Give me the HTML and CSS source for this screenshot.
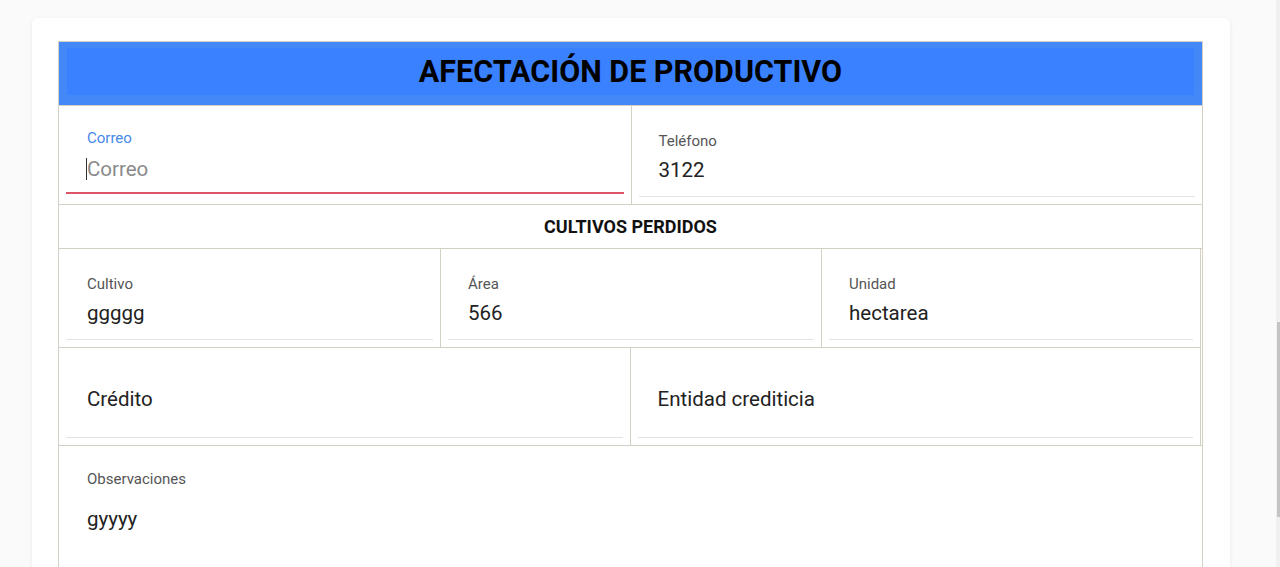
FILE: index.html
```html
<!DOCTYPE html>
<html lang="es">
<head>
<meta charset="utf-8">
<title>Afectación de productivo</title>
<link rel="stylesheet" href="styles.css">
</head>
<body>
<div class="page">
  <div class="card">
    <div class="form">
      <div class="head"><div class="head-inner">AFECTACIÓN DE PRODUCTIVO</div></div>
      <div class="row two">
        <div class="cell">
          <div class="field focus">
            <div class="label blue">Correo</div>
            <div class="value placeholder"><span class="caret"></span>Correo</div>
          </div>
        </div>
        <div class="cell divider">
          <div class="field">
            <div class="label">Teléfono</div>
            <div class="value">3122</div>
          </div>
        </div>
      </div>
      <div class="row section">CULTIVOS PERDIDOS</div>
      <div class="sub">
        <div class="row three">
          <div class="cell">
            <div class="field">
              <div class="label">Cultivo</div>
              <div class="value">ggggg</div>
            </div>
          </div>
          <div class="cell divider">
            <div class="field">
              <div class="label">Área</div>
              <div class="value">566</div>
            </div>
          </div>
          <div class="cell divider">
            <div class="field">
              <div class="label">Unidad</div>
              <div class="value">hectarea</div>
            </div>
          </div>
        </div>
        <div class="row two">
          <div class="cell">
            <div class="field empty">
              <div class="big">Crédito</div>
            </div>
          </div>
          <div class="cell divider">
            <div class="field empty">
              <div class="big">Entidad crediticia</div>
            </div>
          </div>
        </div>
      </div>
      <div class="row obs">
        <div class="obs-field">
          <div class="label">Observaciones</div>
          <div class="value obs-value">gyyyy</div>
        </div>
      </div>
    </div>
  </div>
</div>
<div class="scrollbar"><div class="thumb"></div></div>
</body>
</html>
```
FILE: styles.css
```css
html, body {
  margin: 0;
  padding: 0;
  background: #fafafa;
  overflow: hidden;
  font-family: Roboto, "Liberation Sans", Arial, sans-serif;
  color: #212121;
}
.page {
  padding: 18px 50px 0 32px;
}
.card {
  background: #ffffff;
  border-radius: 6px;
  box-shadow: 0 1px 4px rgba(0, 0, 0, 0.07);
  padding: 23px 27px 60px 26px;
}
.form {
  border: 1px solid #d3d1c4;
}
.head {
  background: #4487f7;
  padding: 6px 8px 10px;
}
.head-inner {
  background: #3a81ff;
  height: 47px;
  display: flex;
  align-items: center;
  justify-content: center;
  font-size: 30.5px;
  font-weight: 700;
  color: #000;
}
.row {
  border-top: 1px solid #d3d1c4;
}
.two {
  display: grid;
  grid-template-columns: 1fr 1fr;
}
.three {
  display: grid;
  grid-template-columns: 381px 381px 1fr;
}
.cell {
  padding: 0 7px 7px;
}
.divider {
  border-left: 1px solid #d3d1c4;
}
.field {
  padding: 27px 0 14px 21px;
  border-bottom: 1px solid #e3e3e3;
}
.divider .field {
  padding-left: 20px;
}
.field.focus {
  padding: 24px 0 11px 21px;
  border-bottom: 2px solid #dc5569;
}
.field.focus .value {
  margin-top: 11px;
}
.label {
  font-size: 15px;
  line-height: 16px;
  color: #555;
}
.label.blue {
  color: #4688ea;
}
.value {
  font-size: 20.5px;
  line-height: 24px;
  margin-top: 9px;
  color: #222;
}
.placeholder {
  color: #8a8a8a;
}
.caret {
  display: inline-block;
  width: 1px;
  height: 22px;
  background: #333;
  vertical-align: -4px;
  margin-left: -1px;
}
.field.empty {
  padding: 39px 0 26px 21px;
}
.divider .field.empty {
  padding-left: 20px;
}
.big {
  font-size: 20.5px;
  line-height: 24px;
  color: #222;
}
.section {
  height: 43px;
  display: flex;
  align-items: center;
  justify-content: center;
  font-size: 18px;
  font-weight: 700;
  color: #111;
  border-bottom: 1px solid #d3d1c4;
}
.sub {
  border-right: 1px solid #d3d1c4;
  margin-right: 1px;
}
.sub > .row:first-child {
  border-top: none;
}
.obs {
  padding: 25px 0 40px 28px;
}
.obs-value {
  margin-top: 20px;
}
.scrollbar {
  position: fixed;
  top: 0;
  right: 0;
  width: 4px;
  height: 100%;
  background: #f0f0f0;
}
.thumb {
  position: absolute;
  top: 322px;
  right: 0;
  width: 3px;
  height: 195px;
  background: #c4c4c4;
}
```
